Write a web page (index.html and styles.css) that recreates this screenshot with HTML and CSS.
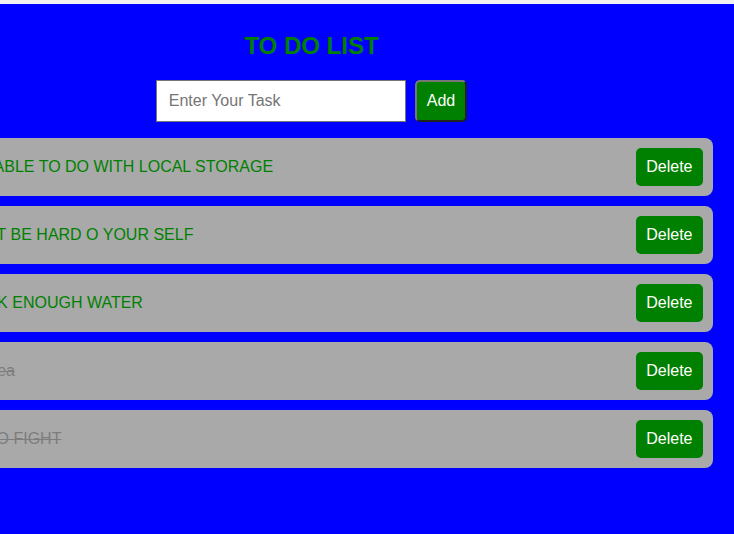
FILE: index.html
```html
<!DOCTYPE html>
<html lang="en">
<head>
<meta charset="utf-8">
<title>To Do List</title>
<link rel="stylesheet" href="styles.css">
</head>
<body>
  <div class="app">
    <h2 class="title">TO DO LIST</h2>
    <div class="input-row">
      <input class="task-input" type="text" placeholder="Enter Your Task">
      <button class="add-btn">Add</button>
    </div>
    <ul class="task-list">
      <li class="task"><span class="task-text">I AM ABLE TO DO WITH LOCAL STORAGE</span><button class="del-btn">Delete</button></li>
      <li class="task"><span class="task-text">DON'T BE HARD O YOUR SELF</span><button class="del-btn">Delete</button></li>
      <li class="task"><span class="task-text">DRINK ENOUGH WATER</span><button class="del-btn">Delete</button></li>
      <li class="task"><span class="task-text done">Iced tea</span><button class="del-btn">Delete</button></li>
      <li class="task"><span class="task-text done">GO TO FIGHT</span><button class="del-btn">Delete</button></li>
    </ul>
  </div>
</body>
</html>
```
FILE: styles.css
```css
html {
  background: #0000ff;
}
body {
  margin: 0;
  border-top: 4px solid #f1f1f1;
  font-family: "Liberation Sans", Arial, sans-serif;
}
.app {
  width: 803px;
  margin-left: -90px;
  padding-top: 28px;
}
.title {
  margin: 0 0 20px;
  font-size: 24px;
  line-height: 28px;
  font-weight: bold;
  color: #008000;
  text-align: center;
}
.input-row {
  display: flex;
  justify-content: center;
  gap: 9px;
}
.task-input {
  box-sizing: border-box;
  width: 250px;
  height: 42px;
  margin: 0;
  padding: 0 12px;
  border: 1px solid #767676;
  font-family: "Liberation Sans", Arial, sans-serif;
  font-size: 16px;
  background: #ffffff;
}
.task-input::placeholder {
  color: #757575;
}
.add-btn {
  box-sizing: border-box;
  height: 42px;
  margin: 0;
  padding: 0 10px;
  background: #008000;
  color: #ffffff;
  border: 2px outset #767676;
  border-radius: 5px;
  font-family: "Liberation Sans", Arial, sans-serif;
  font-size: 16px;
}
.task-list {
  list-style: none;
  margin: 16px 0 0;
  padding: 0 0 0 40px;
}
.task {
  display: flex;
  align-items: center;
  justify-content: space-between;
  background: #a9a9a9;
  border-radius: 8px;
  padding: 10px 10px 10px 8px;
  margin-bottom: 10px;
}
.task-text {
  font-size: 16px;
  color: #008000;
}
.task-text.done {
  color: #7d7d7d;
  text-decoration: line-through;
}
.del-btn {
  margin: 0;
  padding: 10px 10.5px;
  background: #008000;
  color: #ffffff;
  border: none;
  border-radius: 5px;
  font-family: "Liberation Sans", Arial, sans-serif;
  font-size: 16px;
  line-height: normal;
}
```
